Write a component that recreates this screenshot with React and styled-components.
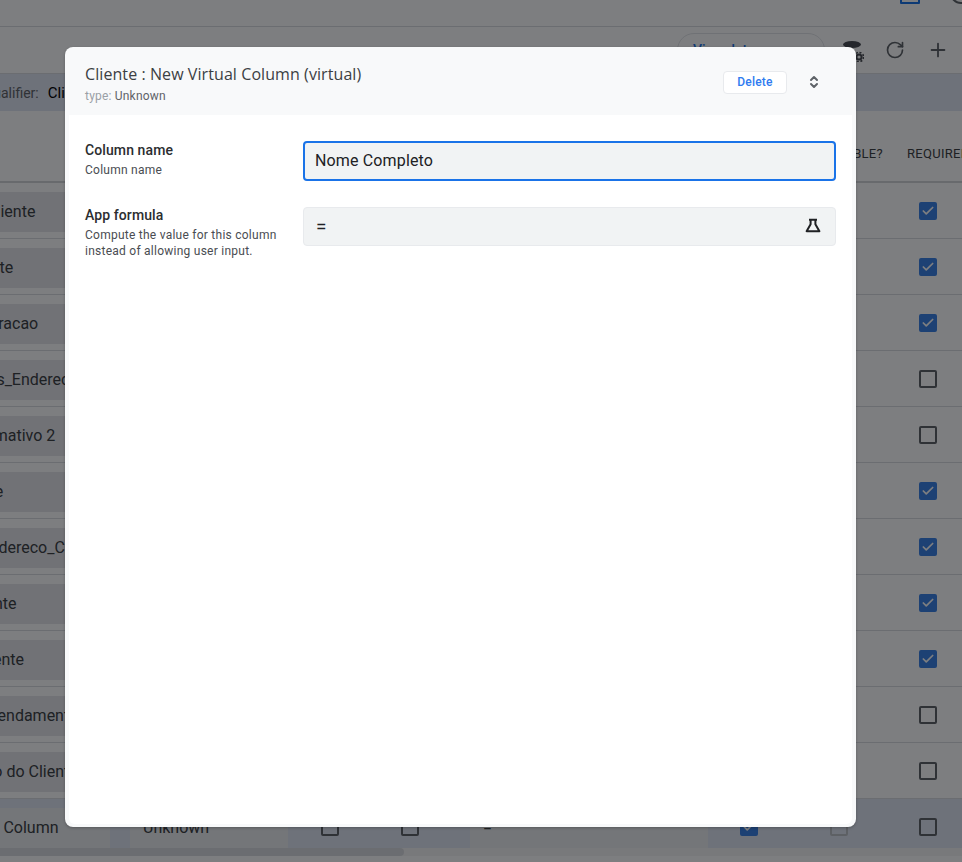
import React from 'react';
import styled, { createGlobalStyle } from 'styled-components';
import { Check, Plus, RotateCw } from 'lucide-react';

const rows = [
  { name: 'Nome do Cliente', required: true },
  { name: 'Nome Cliente', required: true },
  { name: 'Data_de Geracao', required: true },
  { name: 'Mais_Dados_Endereco', required: false },
  { name: 'Outro Informativo 2', required: false },
  { name: 'Data Cliente', required: true },
  { name: 'Campos Endereco_Cliente', required: true },
  { name: 'Nome_Cliente', required: true },
  { name: 'Codigo_Cliente', required: true },
  { name: 'Horarios Atendamento', required: false },
  { name: 'Localizacao do Cliente', required: false },
];

const GlobalStyle = createGlobalStyle`
  html, body {
    margin: 0;
    height: 100%;
    overflow: hidden;
    background: #ffffff;
    font-family: Roboto, "Liberation Sans", sans-serif;
  }
`;

const Page = styled.div`
  position: relative;
  height: 862px;
  overflow: hidden;
  color: #202124;
`;

const TopBar = styled.div`
  height: 26px;
  border-bottom: 1px solid #dadce0;
  display: flex;
  justify-content: flex-end;
  align-items: flex-start;
  gap: 30px;
  overflow: hidden;
`;

const TopSquare = styled.div`
  flex: none;
  width: 16px;
  height: 16px;
  margin-top: -16px;
  border: 2px solid #1a73e8;
  border-radius: 1px;
`;

const TopCircle = styled.div`
  flex: none;
  width: 18px;
  height: 18px;
  margin: -18px -10px 0 0;
  border: 2px solid #5f6368;
  border-radius: 50%;
`;

const Toolbar = styled.div`
  height: 46px;
  border-bottom: 1px solid #dadce0;
  display: flex;
  align-items: center;
  justify-content: flex-end;
  padding: 0 12px 0 0;
  color: #5f6368;
`;

const ViewData = styled.div`
  width: 131px;
  height: 32px;
  margin-right: 15px;
  padding-left: 15px;
  border: 1px solid #e3e5e8;
  border-radius: 17px;
  color: #1a73e8;
  font-size: 14px;
  font-weight: 500;
  line-height: 33px;
`;

const ToolIcon = styled.div`
  width: 24px;
  height: 24px;
  margin-left: ${p => p.$gap}px;
  display: flex;
  align-items: center;
  justify-content: center;
`;

const QualifierBar = styled.div`
  height: 37px;
  background: #e1e6f2;
  display: flex;
  align-items: center;
  overflow: hidden;
  font-size: 14px;
  color: #5f6368;
`;

const QualifierLabel = styled.span`
  margin-left: -52px;
  white-space: nowrap;
`;

const QualifierValue = styled.span`
  margin-left: 9px;
  color: #000000;
  font-size: 15px;
  white-space: nowrap;
`;

const Table = styled.div`
  margin-left: -200px;
  width: 1300px;
`;

const columns = '310px 20px 158px 2px 80px 80px 20px 238px 82px 98px 1fr';

const HeaderRow = styled.div`
  height: 70px;
  display: grid;
  grid-template-columns: ${columns};
  align-items: center;
  border-bottom: 2px solid #d3d5d9;
  font-size: 13px;
  letter-spacing: 0.3px;
  color: #3c4043;
`;

const HeadCell = styled.div`
  grid-column: ${p => p.$col};
  padding: 0 ${p => p.$padEnd || 0}px 0 ${p => p.$pad || 0}px;
  text-align: ${p => p.$align || 'left'};
  white-space: nowrap;
  margin-top: 15px;
`;

const Row = styled.div`
  height: ${p => (p.$last ? 49 : 56)}px;
  box-sizing: border-box;
  padding-top: 9px;
  display: grid;
  grid-template-columns: ${columns};
  align-items: start;
  background: ${p => (p.$active ? '#e1e6f2' : 'transparent')};
  border-bottom: ${p => (p.$last ? 0 : '1px solid #dadce0')};
`;

const NameCell = styled.div`
  grid-column: 1;
  height: 40px;
  padding-left: 117px;
  background: ${p => (p.$active ? '#eceef0' : '#e6e7ea')};
  font-size: 16px;
  line-height: 40px;
  white-space: nowrap;
  overflow: hidden;
  color: #3c4043;
`;

const TypeCell = styled.div`
  grid-column: 3;
  height: 40px;
  padding-left: 13px;
  background: #eceef0;
  font-size: 16px;
  line-height: 40px;
  color: #3c4043;
`;

const CheckCell = styled.div`
  grid-column: ${p => p.$col};
  height: 38px;
  display: flex;
  align-items: center;
  justify-content: ${p => (p.$left ? 'flex-start' : 'center')};
  padding-left: ${p => (p.$left ? 31 : 0)}px;
`;

const FormulaCell = styled.div`
  grid-column: 8;
  height: 40px;
  padding-left: 13px;
  background: #eceef0;
  font-size: 16px;
  line-height: 40px;
  color: #3c4043;
`;

const Box = styled.div`
  width: 18px;
  height: 18px;
  box-sizing: border-box;
  border: 2px solid ${p => (p.$muted ? '#bdc1c6' : '#5f6368')};
  border-radius: 2px;
  display: flex;
  align-items: center;
  justify-content: center;
  color: #fff;
  ${p => p.$checked && 'background: #3b82e6; border-color: #3b82e6;'}
`;

const ScrollTrack = styled.div`
  height: 8px;
  background: #f5f5f5;
`;

const ScrollThumb = styled.div`
  width: 404px;
  height: 8px;
  border-radius: 0 4px 4px 0;
  background: #dadce0;
`;

const Overlay = styled.div`
  position: absolute;
  inset: 0;
  box-sizing: border-box;
  padding: 47px 106px 35px 65px;
  display: flex;
  background: rgba(2, 4, 8, 0.515);
`;

const Modal = styled.div`
  flex: 1;
  display: flex;
  flex-direction: column;
  border-radius: 8px;
  background: #f8f9fa;
  box-shadow: 0 1px 3px rgba(0, 0, 0, 0.25);
  padding: 0 4px 3px;
`;

const ModalHead = styled.div`
  height: 68px;
  box-sizing: border-box;
  display: flex;
  align-items: center;
  padding: 2px 0 0 16px;
`;

const Titles = styled.div`
  flex: 1;
  padding-top: 2px;
`;

const Title = styled.div`
  font-family: "Open Sans", Roboto, sans-serif;
  font-size: 16px;
  line-height: 20px;
  letter-spacing: 0.08px;
  color: #3c4043;
`;

const TypeLine = styled.div`
  margin-top: 5px;
  font-size: 12px;
  line-height: 14px;
  letter-spacing: 0.2px;
  color: #5f6368;
`;

const TypeKey = styled.span`
  color: #9aa0a6;
`;

const DeleteButton = styled.button`
  width: 64px;
  height: 23px;
  padding: 0;
  background: #ffffff;
  border: 1px solid #e8eaed;
  border-radius: 4px;
  color: #2f7bf0;
  font-family: Roboto, sans-serif;
  font-size: 12px;
  font-weight: 500;
  letter-spacing: 0.2px;
`;

const Expand = styled.div`
  width: 16px;
  height: 16px;
  margin: 0 30px 0 19px;
  color: #5f6368;
`;

const ModalBody = styled.div`
  flex: 1;
  background: #ffffff;
  border-radius: 0 0 6px 6px;
  padding: 26px 16px 0;
  display: flex;
  flex-direction: column;
  gap: 26px;
`;

const Field = styled.div`
  display: grid;
  grid-template-columns: 218px 533px;
`;

const FieldLabel = styled.div`
  margin-top: ${p => p.$lift}px;
  font-size: 14px;
  font-weight: 500;
  line-height: 20px;
  letter-spacing: 0.1px;
  color: #2b2d30;
`;

const FieldHint = styled.div`
  margin-top: 2px;
  font-size: 12px;
  font-weight: 400;
  line-height: 16px;
  letter-spacing: 0.25px;
  color: #4a4d52;
`;

const NameInput = styled.input`
  box-sizing: border-box;
  width: 533px;
  height: 40px;
  padding: 0 10px 2px;
  background: #f1f3f4;
  border: 2px solid #1a73e8;
  border-radius: 4px;
  outline: none;
  font-family: Roboto, sans-serif;
  font-size: 16px;
  letter-spacing: 0.15px;
  color: #202124;
`;

const FormulaBox = styled.div`
  box-sizing: border-box;
  height: 39px;
  padding: 0 13px 0 12px;
  display: flex;
  align-items: center;
  justify-content: space-between;
  background: #f1f3f4;
  border: 1px solid #e8eaed;
  border-radius: 4px;
  font-size: 19px;
  color: #202124;
`;

const DbGearIcon = () => (
  <svg width="24" height="24" viewBox="0 0 24 24" fill="none">
    <ellipse cx="12" cy="6.5" rx="9" ry="3.5" fill="#4a4d52" />
    <circle cx="19" cy="19" r="2.6" stroke="#4a4d52" strokeWidth="2" />
    <circle cx="19" cy="19" r="4.6" stroke="#4a4d52" strokeWidth="1.6" strokeDasharray="2 1.6" />
  </svg>
);

const ExpandIcon = () => (
  <svg width="16" height="16" viewBox="0 0 16 16" fill="none" stroke="currentColor" strokeWidth="2" strokeLinecap="round" strokeLinejoin="round">
    <path d="M5 6l3-3 3 3M5 10l3 3 3-3" />
  </svg>
);

const FlaskIcon = () => (
  <svg width="18" height="18" viewBox="0 0 18 18" fill="none" stroke="#202124" strokeWidth="2" strokeLinejoin="round">
    <path d="M5 1.8h8M6.6 1.8v4.5L2.6 13.2h12.8L11.4 6.3V1.8" />
  </svg>
);

const CheckBox = ({ checked, muted }) => (
  <Box $checked={checked} $muted={muted}>
    {checked && <Check size={14} strokeWidth={3} />}
  </Box>
);

const App = () => (
  <>
    <GlobalStyle />
    <Page>
      <TopBar>
        <TopSquare />
        <TopCircle />
      </TopBar>
      <Toolbar>
        <ViewData>View data</ViewData>
        <ToolIcon $gap={0}><DbGearIcon /></ToolIcon>
        <ToolIcon $gap={19}><RotateCw size={20} /></ToolIcon>
        <ToolIcon $gap={19}><Plus size={22} /></ToolIcon>
      </Toolbar>
      <QualifierBar>
        <QualifierLabel>Label qualifier:</QualifierLabel>
        <QualifierValue>Cliente</QualifierValue>
      </QualifierBar>
      <Table>
        <HeaderRow>
          <HeadCell $col="1" $pad={117}>NAME</HeadCell>
          <HeadCell $col="3" $pad={13}>TYPE</HeadCell>
          <HeadCell $col="10" $align="right" $padEnd={5}>EDITABLE?</HeadCell>
          <HeadCell $col="11" $pad={19}>REQUIRED?</HeadCell>
        </HeaderRow>
        {rows.map((row, i) => (
          <Row key={i}>
            <NameCell>{row.name}</NameCell>
            <TypeCell>Text</TypeCell>
            <CheckCell $col="11" $left>
              <CheckBox checked={row.required} />
            </CheckCell>
          </Row>
        ))}
        <Row $active $last>
          <NameCell $active>New Virtual Column</NameCell>
          <TypeCell>Unknown</TypeCell>
          <CheckCell $col="5"><CheckBox /></CheckCell>
          <CheckCell $col="6"><CheckBox /></CheckCell>
          <FormulaCell>=</FormulaCell>
          <CheckCell $col="9"><CheckBox checked /></CheckCell>
          <CheckCell $col="10"><CheckBox muted /></CheckCell>
          <CheckCell $col="11" $left><CheckBox /></CheckCell>
        </Row>
      </Table>
      <ScrollTrack><ScrollThumb /></ScrollTrack>
      <Overlay>
        <Modal>
          <ModalHead>
            <Titles>
              <Title>Cliente : New Virtual Column (virtual)</Title>
              <TypeLine><TypeKey>type:</TypeKey> Unknown</TypeLine>
            </Titles>
            <DeleteButton>Delete</DeleteButton>
            <Expand><ExpandIcon /></Expand>
          </ModalHead>
          <ModalBody>
            <Field>
              <FieldLabel $lift={-1}>
                Column name
                <FieldHint>Column name</FieldHint>
              </FieldLabel>
              <NameInput defaultValue="Nome Completo" />
            </Field>
            <Field>
              <FieldLabel $lift={-2}>
                App formula
                <FieldHint>Compute the value for this column<br />instead of allowing user input.</FieldHint>
              </FieldLabel>
              <FormulaBox>
                =
                <FlaskIcon />
              </FormulaBox>
            </Field>
          </ModalBody>
        </Modal>
      </Overlay>
    </Page>
  </>
);

export default App;
